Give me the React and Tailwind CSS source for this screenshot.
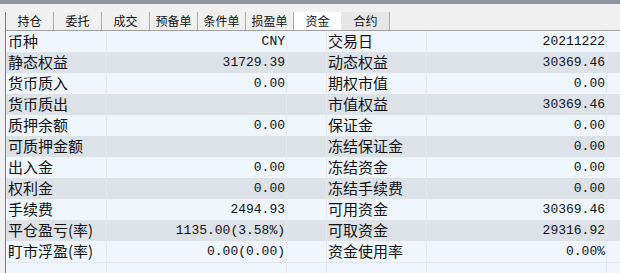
import React from "react";

const tabs = ["持仓", "委托", "成交", "预备单", "条件单", "损盈单", "资金", "合约"];

const rows = [
  ["币种", "CNY", "交易日", "20211222"],
  ["静态权益", "31729.39", "动态权益", "30369.46"],
  ["货币质入", "0.00", "期权市值", "0.00"],
  ["货币质出", "", "市值权益", "30369.46"],
  ["质押余额", "0.00", "保证金", "0.00"],
  ["可质押金额", "", "冻结保证金", "0.00"],
  ["出入金", "0.00", "冻结资金", "0.00"],
  ["权利金", "0.00", "冻结手续费", "0.00"],
  ["手续费", "2494.93", "可用资金", "30369.46"],
  ["平仓盈亏(率)", "1135.00(3.58%)", "可取资金", "29316.92"],
  ["盯市浮盈(率)", "0.00(0.00)", "资金使用率", "0.00%"],
];

const cjk = { fontFamily: '"Noto Sans CJK SC", "Noto Sans", sans-serif' };
const mono = { fontFamily: '"Liberation Mono", "Noto Sans CJK SC", monospace' };

function Row({ label, value, label2, value2, odd }) {
  const bg = odd ? "bg-[#dde2e9]" : "bg-[#f0f6fe]";
  const cell = "h-[21px] border-r border-[#e4e9f1] flex items-center";
  return (
    <div className={`grid grid-cols-[101px_180px_40px_100px_180px_1fr] ${bg}`}>
      <div className={`${cell} pl-[2px] text-[15px] text-[#111]`} style={cjk}>
        {label}
      </div>
      <div className={`${cell} justify-end pr-[1px] text-[13px] text-[#111]`} style={mono}>
        {value}
      </div>
      <div className={cell}></div>
      <div className={`${cell} pl-[1px] text-[15px] text-[#111]`} style={cjk}>
        {label2}
      </div>
      <div className={`${cell} justify-end pr-[1px] text-[13px] text-[#111]`} style={mono}>
        {value2}
      </div>
      <div className="h-[21px]"></div>
    </div>
  );
}

export default function App() {
  return (
    <div className="w-[620px] h-[273px] bg-[#f0f0f0] overflow-hidden">
      <div className="h-[4px] bg-[#8e959f]"></div>
      <div className="h-[8px]"></div>
      <div className="flex h-[18px] ml-[5px] border-l border-[#7a7a7a]">
        {tabs.map((t) => (
          <div
            key={t}
            className={`w-[48px] flex items-center justify-center text-[12px] text-[#111] border-r ${
              t === "资金"
                ? "bg-white border-[#e8e8e8]"
                : t === "合约"
                ? "bg-[#e6e6e6] border-[#a9a9a9]"
                : "bg-[#f0f0f0] border-[#a9a9a9]"
            }`}
            style={cjk}
          >
            {t}
          </div>
        ))}
      </div>
      <div className="ml-[5px] border-l border-t border-l-[#7a7a7a] border-t-[#a0a0a0] bg-[#f0f6fe] h-[243px]">
        {rows.map((r, i) => (
          <Row
            key={r[0]}
            label={r[0]}
            value={r[1]}
            label2={r[2]}
            value2={r[3]}
            odd={i % 2 === 1}
          />
        ))}
        <div className="grid grid-cols-[101px_180px_40px_100px_180px_1fr] border-t border-[#e4e9f1]">
          <div className="h-[11px] border-r border-[#e4e9f1]"></div>
          <div className="h-[11px] border-r border-[#e4e9f1]"></div>
          <div className="h-[11px] border-r border-[#e4e9f1]"></div>
          <div className="h-[11px] border-r border-[#e4e9f1]"></div>
          <div className="h-[11px] border-r border-[#e4e9f1]"></div>
          <div className="h-[11px]"></div>
        </div>
      </div>
    </div>
  );
}
